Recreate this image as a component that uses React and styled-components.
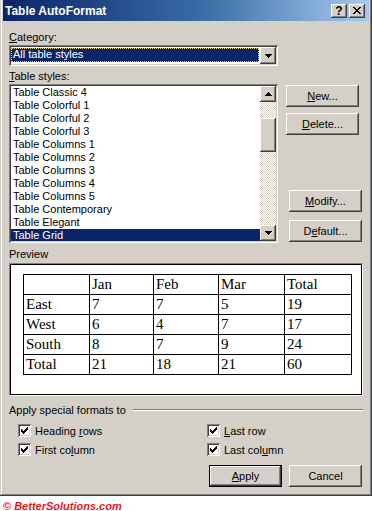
import React from 'react';
import styled, { createGlobalStyle, css } from 'styled-components';

const GlobalStyle = createGlobalStyle`
  body { margin: 0; background: #fff; }
  * { box-sizing: border-box; }
`;

const FACE = '#D4D0C8';
const NAVY = '#0A246A';

const raised = css`
  background: ${FACE};
  box-shadow: inset -1px -1px #404040, inset 1px 1px #fff, inset -2px -2px #808080, inset 2px 2px ${FACE};
`;

const sunken = css`
  box-shadow: inset 1px 1px #808080, inset -1px -1px #fff, inset 2px 2px #404040, inset -2px -2px ${FACE};
`;

const Window = styled.div`
  width: 372px;
  height: 496px;
  background: ${FACE};
  padding: 0 3px 3px;
  display: flex;
  flex-direction: column;
  box-shadow: inset -1px -1px #404040, inset 1px 0 ${FACE}, inset -2px -2px #808080, inset 2px 0 #fff;
  font-family: "Liberation Sans", Arial, sans-serif;
  font-size: 11px;
  color: #000;
`;

const TitleBar = styled.div`
  height: 21px;
  display: flex;
  align-items: center;
  padding: 0 4px 0 2px;
  background: linear-gradient(to right, ${NAVY} 0%, #3A6EA5 55%, #A6CAF0 100%);
  color: #fff;
  font-weight: bold;
  font-size: 12px;
`;

const Title = styled.div`
  flex: 1;
`;

const TitleButton = styled.div`
  ${raised};
  width: 16px;
  height: 14px;
  margin-left: 2px;
  display: flex;
  align-items: center;
  justify-content: center;
  color: #000;
  font-size: 12px;
  font-weight: bold;
  line-height: 14px;
`;

const Body = styled.div`
  flex: 1;
  padding: 10px 6px 6px;
  display: flex;
  flex-direction: column;
`;

const Label = styled.div`
  height: 13px;
  line-height: 13px;
  margin-top: ${(p) => p.gap || 0}px;
  white-space: nowrap;
`;

const Combo = styled.div`
  ${sunken};
  background: #fff;
  width: 269px;
  height: 21px;
  margin-top: 1px;
  padding: 2px;
  display: flex;
`;

const ComboValue = styled.div`
  flex: 1;
  margin: 1px 1px 2px 0;
  background: ${NAVY};
  color: #fff;
  line-height: 13px;
  padding-left: 2px;
  outline: 1px dotted #E8D070;
  outline-offset: -1px;
`;

const ArrowButton = styled.div`
  ${raised};
  width: 16px;
  height: ${(p) => p.h || 16}px;
  display: flex;
  align-items: center;
  justify-content: center;
  flex-shrink: 0;
`;

const ListRow = styled.div`
  display: flex;
  margin-top: 1px;
`;

const ListBox = styled.div`
  ${sunken};
  background: #fff;
  width: 269px;
  height: 159px;
  padding: 2px;
  display: flex;
  overflow: hidden;
`;

const Items = styled.div`
  flex: 1;
  overflow: hidden;
`;

const Item = styled.div`
  height: 13px;
  line-height: 13px;
  padding-left: 2px;
  white-space: nowrap;
  background: ${(p) => (p.selected ? NAVY : 'transparent')};
  color: ${(p) => (p.selected ? '#fff' : '#000')};
`;

const ScrollBar = styled.div`
  width: 16px;
  display: flex;
  flex-direction: column;
`;

const Track = styled.div`
  flex: 1;
  background: repeating-conic-gradient(#fff 0 25%, ${FACE} 0 50%) 0 0 / 2px 2px;
  padding-top: 16px;
`;

const Thumb = styled.div`
  ${raised};
  height: 34px;
`;

const SideButtons = styled.div`
  margin-left: 8px;
  padding: 1px 0 1px;
  display: flex;
  flex-direction: column;
  justify-content: space-between;
`;

const ButtonGroup = styled.div`
  display: flex;
  flex-direction: column;
  gap: ${(p) => p.gap}px;
  margin-left: ${(p) => p.shift || 0}px;
`;

const Button = styled.div`
  ${raised};
  width: 73px;
  height: 22px;
  display: flex;
  align-items: center;
  justify-content: center;
  ${(p) =>
    p.isDefault &&
    css`
      box-shadow: inset 0 0 0 1px #000, inset -2px -2px #404040, inset 2px 2px #fff, inset -3px -3px #808080;
    `}
`;

const PreviewBox = styled.div`
  margin-top: 2px;
  width: 354px;
  height: 133px;
  background: #fff;
  border: 1px solid;
  border-color: #808080 #fff #fff #808080;
  box-shadow: inset 0 0 0 1px #000;
  padding: 10px 13px;
`;

const Grid = styled.table`
  border-collapse: collapse;
  table-layout: fixed;
  width: 328px;
  font-family: "Liberation Serif", "Times New Roman", serif;
  font-size: 15px;
`;

const Cell = styled.td`
  border: 1px solid #000;
  height: 20px;
  padding: 0 2px;
  line-height: 17px;
  white-space: nowrap;
`;

const FormatsHeader = styled.div`
  display: flex;
  align-items: center;
  gap: 7px;
  height: 13px;
  margin-top: 7px;
`;

const Etched = styled.div`
  flex: 1;
  border-top: 1px solid #808080;
  border-bottom: 1px solid #fff;
  margin-top: 1px;
`;

const Checks = styled.div`
  display: grid;
  grid-template-columns: 189px 1fr;
  row-gap: 6px;
  padding-left: 9px;
  margin-top: 8px;
`;

const CheckItem = styled.div`
  display: flex;
  align-items: center;
  gap: 4px;
  height: 13px;
`;

const Box = styled.div`
  width: 13px;
  height: 13px;
  background: #fff;
  ${sunken};
  padding: 3px;
  display: flex;
`;

const Footer = styled.div`
  display: flex;
  justify-content: flex-end;
  gap: 7px;
  margin-top: 9px;
  padding-right: 1px;
`;

const Copyright = styled.div`
  padding: 4px 0 0 3px;
  color: #E8151B;
  font-family: "Liberation Sans", Arial, sans-serif;
  font-weight: bold;
  font-style: italic;
  font-size: 11px;
  line-height: 12px;
`;

const Tri = ({ up }) => (
  <svg width="7" height="4" viewBox="0 0 7 4" shapeRendering="crispEdges">
    <path d={up ? 'M3 0h1v1h1v1h1v1h1v1H0V3h1V2h1V1h1z' : 'M0 0h7v1H6v1H5v1H4v1H3V3H2V2H1V1H0z'} fill="#000" />
  </svg>
);

const Check = () => (
  <svg width="7" height="7" viewBox="0 0 7 7" shapeRendering="crispEdges">
    <path
      d="M6 0h1v1h-1z M5 1h2v1h-2z M0 2h1v1h-1z M4 2h3v1h-3z M0 3h2v1h-2z M3 3h3v1h-3z M0 4h5v1h-5z M1 5h3v1h-3z M2 6h1v1h-1z"
      fill="#000"
    />
  </svg>
);

const CloseGlyph = () => (
  <svg width="8" height="7" viewBox="0 0 8 7" shapeRendering="crispEdges">
    <path
      d="M0 0h2v1h-2z M6 0h2v1h-2z M1 1h2v1h-2z M5 1h2v1h-2z M2 2h4v1h-4z M3 3h2v1h-2z M2 4h4v1h-4z M1 5h2v1h-2z M5 5h2v1h-2z M0 6h2v1h-2z M6 6h2v1h-2z"
      fill="#000"
    />
  </svg>
);

const styles = [
  'Table Classic 4',
  'Table Colorful 1',
  'Table Colorful 2',
  'Table Colorful 3',
  'Table Columns 1',
  'Table Columns 2',
  'Table Columns 3',
  'Table Columns 4',
  'Table Columns 5',
  'Table Contemporary',
  'Table Elegant',
  'Table Grid',
];

const rows = [
  ['', 'Jan', 'Feb', 'Mar', 'Total'],
  ['East', '7', '7', '5', '19'],
  ['West', '6', '4', '7', '17'],
  ['South', '8', '7', '9', '24'],
  ['Total', '21', '18', '21', '60'],
];

const colWidths = [66, 64, 65, 66, 67];

const CheckBox = ({ children }) => (
  <CheckItem>
    <Box>
      <Check />
    </Box>
    <span>{children}</span>
  </CheckItem>
);

const App = () => {
  return (
    <>
      <GlobalStyle />
      <Window>
        <TitleBar>
          <Title>Table AutoFormat</Title>
          <TitleButton>?</TitleButton>
          <TitleButton>
            <CloseGlyph />
          </TitleButton>
        </TitleBar>
        <Body>
          <Label>
            <u>C</u>ategory:
          </Label>
          <Combo>
            <ComboValue>All table styles</ComboValue>
            <ArrowButton h={17}>
              <Tri />
            </ArrowButton>
          </Combo>
          <Label gap={4}>
            <u>T</u>able styles:
          </Label>
          <ListRow>
            <ListBox>
              <Items>
                {styles.map((s) => (
                  <Item key={s} selected={s === 'Table Grid'}>
                    {s}
                  </Item>
                ))}
              </Items>
              <ScrollBar>
                <ArrowButton>
                  <Tri up />
                </ArrowButton>
                <Track>
                  <Thumb />
                </Track>
                <ArrowButton>
                  <Tri />
                </ArrowButton>
              </ScrollBar>
            </ListBox>
            <SideButtons>
              <ButtonGroup gap={6}>
                <Button>
                  <span>
                    <u>N</u>ew...
                  </span>
                </Button>
                <Button>
                  <span>
                    <u>D</u>elete...
                  </span>
                </Button>
              </ButtonGroup>
              <ButtonGroup gap={8} shift={3}>
                <Button>
                  <span>
                    <u>M</u>odify...
                  </span>
                </Button>
                <Button>
                  <span>
                    D<u>e</u>fault...
                  </span>
                </Button>
              </ButtonGroup>
            </SideButtons>
          </ListRow>
          <Label gap={5}>Preview</Label>
          <PreviewBox>
            <Grid>
              <colgroup>
                {colWidths.map((w, i) => (
                  <col key={i} style={{ width: w }} />
                ))}
              </colgroup>
              <tbody>
                {rows.map((r, i) => (
                  <tr key={i}>
                    {r.map((c, j) => (
                      <Cell key={j}>{c}</Cell>
                    ))}
                  </tr>
                ))}
              </tbody>
            </Grid>
          </PreviewBox>
          <FormatsHeader>
            <span>Apply special formats to</span>
            <Etched />
          </FormatsHeader>
          <Checks>
            <CheckBox>
              Heading <u>r</u>ows
            </CheckBox>
            <CheckBox>
              <u>L</u>ast row
            </CheckBox>
            <CheckBox>
              First co<u>l</u>umn
            </CheckBox>
            <CheckBox>
              Last col<u>u</u>mn
            </CheckBox>
          </Checks>
          <Footer>
            <Button isDefault>
              <span>
                <u>A</u>pply
              </span>
            </Button>
            <Button>Cancel</Button>
          </Footer>
        </Body>
      </Window>
      <Copyright>© BetterSolutions.com</Copyright>
    </>
  );
};

export default App;
